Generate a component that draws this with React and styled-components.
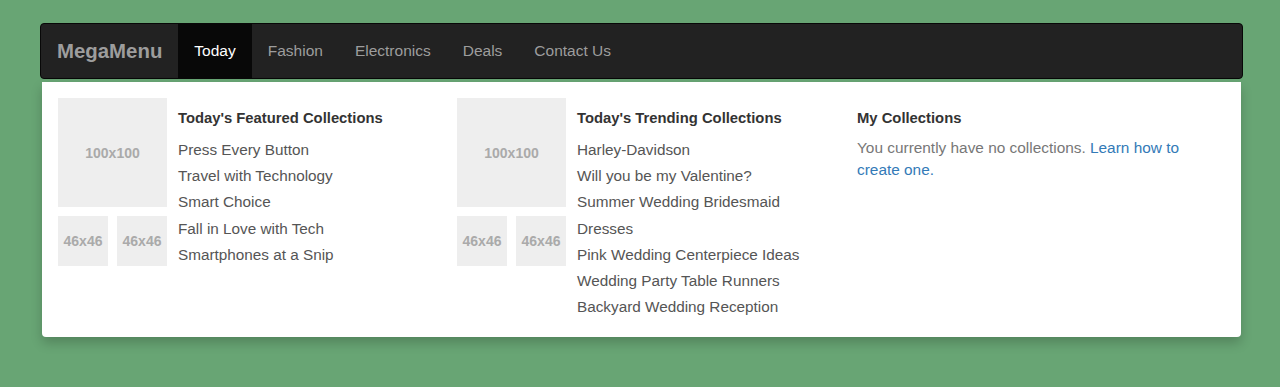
import React from 'react';
import styled, { createGlobalStyle } from 'styled-components';

const GlobalStyle = createGlobalStyle`
    html, body {
        margin: 0;
        padding: 0;
        background-color: #68a574;
        font-family: 'Liberation Sans', Arial, sans-serif;
    }
`;

const navItems = ['Today', 'Fashion', 'Electronics', 'Deals', 'Contact Us'];

const columns = [
    {
        title: "Today's Featured Collections",
        links: [
            'Press Every Button',
            'Travel with Technology',
            'Smart Choice',
            'Fall in Love with Tech',
            'Smartphones at a Snip',
        ],
    },
    {
        title: "Today's Trending Collections",
        links: [
            'Harley-Davidson',
            'Will you be my Valentine?',
            'Summer Wedding Bridesmaid Dresses',
            'Pink Wedding Centerpiece Ideas',
            'Wedding Party Table Runners',
            'Backyard Wedding Reception',
        ],
    },
];

function App() {
    return (
        <>
            <GlobalStyle />
            <SCPage>
                <SCNavbar>
                    <SCBrand>MegaMenu</SCBrand>
                    {navItems.map((item, i) => (
                        <SCNavLink key={item} $active={i === 0}>{item}</SCNavLink>
                    ))}
                </SCNavbar>
                <SCPanel>
                    {columns.map((col) => (
                        <SCCollection key={col.title}>
                            <SCThumbs>
                                <SCThumb $size={109}>100x100</SCThumb>
                                <SCThumbRow>
                                    <SCThumb $size={50}>46x46</SCThumb>
                                    <SCThumb $size={50}>46x46</SCThumb>
                                </SCThumbRow>
                            </SCThumbs>
                            <SCList>
                                <SCHeading>{col.title}</SCHeading>
                                {col.links.map((l) => (
                                    <SCItem key={l}>{l}</SCItem>
                                ))}
                            </SCList>
                        </SCCollection>
                    ))}
                    <SCMine>
                        <SCHeading>My Collections</SCHeading>
                        <SCText>
                            You currently have no collections. <a href="#">Learn how to create one.</a>
                        </SCText>
                    </SCMine>
                </SCPanel>
            </SCPage>
        </>
    );
}

const SCPage = styled.div`
    padding: 23px 37px 50px 40px;
    min-height: 387px;
    box-sizing: border-box;
`;

const SCNavbar = styled.nav`
    display: flex;
    align-items: stretch;
    height: 56px;
    background-color: #222;
    border: 1px solid #080808;
    border-radius: 4px;
    box-sizing: border-box;
    overflow: hidden;
`;

const SCBrand = styled.div`
    display: flex;
    align-items: center;
    padding: 0 16px;
    font-size: 20.4px;
    font-weight: 700;
    color: #9d9d9d;
`;

const SCNavLink = styled.a`
    display: flex;
    align-items: center;
    padding: 0 16px;
    font-size: 15.5px;
    color: ${(p) => (p.$active ? '#fff' : '#9d9d9d')};
    background-color: ${(p) => (p.$active ? '#080808' : 'transparent')};
    text-decoration: none;
`;

const SCPanel = styled.div`
    margin: 3px 2px 0;
    padding: 16px 16px 17px;
    background-color: #fff;
    border-radius: 0 0 4px 4px;
    box-shadow: 0 6px 12px rgba(0, 0, 0, 0.2);
    display: grid;
    grid-template-columns: 399px 400px 1fr;
    align-items: start;
`;

const SCCollection = styled.div`
    display: flex;
    gap: 11px;
`;

const SCThumbs = styled.div`
    display: flex;
    flex-direction: column;
    gap: 9px;
    flex-shrink: 0;
`;

const SCThumbRow = styled.div`
    display: flex;
    gap: 9px;
`;

const SCThumb = styled.div`
    width: ${(p) => p.$size}px;
    height: ${(p) => p.$size}px;
    background-color: #eee;
    color: #aaa;
    font-size: 14px;
    font-weight: 700;
    display: flex;
    align-items: center;
    justify-content: center;
`;

const SCList = styled.div`
    display: flex;
    flex-direction: column;
    width: 240px;
`;

const SCHeading = styled.h4`
    margin: 10px 0 9px;
    font-size: 14.8px;
    line-height: 20px;
    font-weight: 700;
    color: #333;
`;

const SCItem = styled.a`
    font-size: 15.3px;
    line-height: 26.2px;
    color: #555;
    text-decoration: none;
`;

const SCMine = styled.div`
    width: 350px;
`;

const SCText = styled.p`
    margin: 0;
    font-size: 15.4px;
    line-height: 22px;
    color: #777;

    a {
        color: #337ab7;
        text-decoration: none;
    }
`;

export default App;
